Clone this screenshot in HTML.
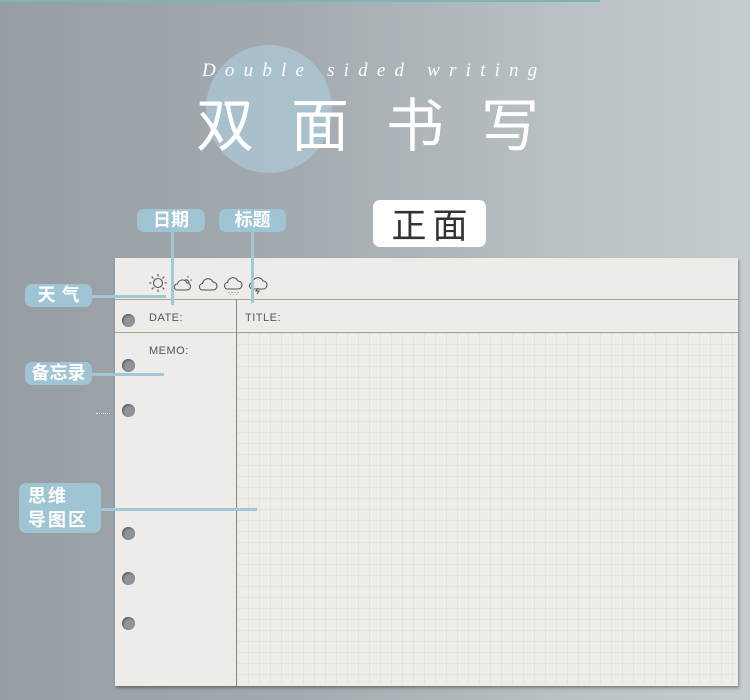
<!DOCTYPE html>
<html><head><meta charset="utf-8"><style>
body{margin:0;width:750px;height:700px;overflow:hidden;position:relative;font-family:"Liberation Sans","Noto Sans CJK SC",sans-serif;
background:linear-gradient(90deg,#969ea4 0%,#a3abb0 40%,#b9c1c4 75%,#c6cdd0 100%);}
.a{position:absolute}
.lab{position:absolute;background:#9fc4d3;color:#fff;font-weight:bold;border-radius:7px;font-size:18px;line-height:23px;text-align:center;letter-spacing:0px}
.ln{position:absolute;background:#a2c8d6}
.hole{position:absolute;width:13px;height:13px;border-radius:50%;background:#8f959a;box-shadow:inset 1px 1px 2px #555}
.t{position:absolute;font-size:11px;color:#555;letter-spacing:.5px}
</style></head><body>
<div class="a" style="left:0;top:0;width:600px;height:2px;background:#7fb3b5"></div>
<div class="a" style="left:206px;top:45px;width:126px;height:128px;border-radius:50%;background:rgba(172,203,216,.7)"></div>
<div class="a" style="left:202px;top:60px;font-family:'Liberation Serif',serif;font-style:italic;font-size:19px;color:#fff;letter-spacing:9.2px;white-space:nowrap">Double sided writing</div>
<div class="a" style="left:196px;top:86px;font-family:'Noto Sans CJK SC',sans-serif;font-weight:400;font-size:58px;line-height:70px;color:#fff;letter-spacing:37px;white-space:nowrap">双面书写</div>
<div class="a" style="left:373px;top:200px;width:113px;height:47px;background:#fff;border-radius:7px;font-family:'Noto Sans CJK SC',sans-serif;font-size:35px;line-height:47px;color:#333;text-align:center;letter-spacing:6px;text-indent:6px">正面</div>
<div class="lab" style="left:137px;top:209px;width:68px">日期</div>
<div class="lab" style="left:219px;top:209px;width:67px">标题</div>
<!-- paper -->
<div class="a" style="left:115px;top:258px;width:623px;height:428px;background:#edece8;box-shadow:1px 2px 3px rgba(0,0,0,.35)">
 <div class="a" style="left:122px;top:75px;right:3px;bottom:2px;background-image:linear-gradient(90deg,rgba(170,170,165,.14) 1px,transparent 1px),linear-gradient(rgba(170,170,165,.14) 1px,transparent 1px);background-size:11px 11px"></div>
 <div class="a" style="left:0;right:0;top:41px;height:1px;background:#a5a5a0"></div>
 <div class="a" style="left:0;right:0;top:74px;height:1px;background:#a5a5a0"></div>
 <div class="a" style="left:121px;top:41px;bottom:0;width:1px;background:#8a8a86"></div>
 <div class="t" style="left:34px;top:54px">DATE:</div>
 <div class="t" style="left:130px;top:54px">TITLE:</div>
 <div class="t" style="left:34px;top:87px">MEMO:</div>
 <svg class="a" style="left:34px;top:14px" width="125" height="24" viewBox="0 0 125 24" fill="none" stroke="#555" stroke-width="1.1">
  <circle cx="9" cy="11" r="4.5"/>
  <path d="M9 2v2.5M9 17.5V20M0 11h2.5M15.5 11H18M2.7 4.7l1.8 1.8M13.5 15.5l1.8 1.8M2.7 17.3l1.8-1.8M13.5 6.5l1.8-1.8"/>
  <path d="M28 18h10a3.5 3.5 0 0 0 0-7 5 5 0 0 0-9.5 1 3 3 0 0 0-.5 6z"/><path d="M36 8a3 3 0 0 1 4 3M39 4v1.5M43 8h-1.5"/>
  <path d="M53 18h11a4 4 0 0 0 0-8 5.5 5.5 0 0 0-10.5 1.5A3.3 3.3 0 0 0 53 18z"/>
  <path d="M78 17h11a4 4 0 0 0 0-8 5.5 5.5 0 0 0-10.5 1.5A3.3 3.3 0 0 0 78 17z"/><path d="M80 20v1M83 20v1M86 20v1M89 20v1M81.5 22.5v.5M84.5 22.5v.5M87.5 22.5v.5" stroke-width=".8"/>
  <path d="M103 17h11a4 4 0 0 0 0-8 5.5 5.5 0 0 0-10.5 1.5A3.3 3.3 0 0 0 103 17z"/><path d="M109 16l-2 3h3l-2 3"/>
 </svg>
</div>
<div class="hole" style="left:122px;top:314px"></div>
<div class="hole" style="left:122px;top:359px"></div>
<div class="hole" style="left:122px;top:404px"></div>
<div class="hole" style="left:122px;top:527px"></div>
<div class="hole" style="left:122px;top:572px"></div>
<div class="hole" style="left:122px;top:617px"></div>
<div class="a" style="left:96px;top:413px;width:14px;height:1px;border-top:1px dotted #eee"></div>
<!-- connectors -->
<div class="ln" style="left:171px;top:232px;width:3px;height:73px"></div>
<div class="ln" style="left:251px;top:232px;width:3px;height:71px"></div>
<div class="ln" style="left:90px;top:295px;width:76px;height:3px"></div>
<div class="ln" style="left:90px;top:373px;width:74px;height:3px"></div>
<div class="ln" style="left:100px;top:508px;width:157px;height:3px"></div>
<div class="lab" style="left:25px;top:284px;width:67px;letter-spacing:6px;text-indent:6px">天气</div>
<div class="lab" style="left:25px;top:362px;width:67px">备忘录</div>
<div class="lab" style="left:19px;top:483px;width:82px;height:50px;line-height:24px;padding-top:1px;text-align:left;box-sizing:border-box;padding-left:9px;letter-spacing:2px">思维<br>导图区</div>
</body></html>
